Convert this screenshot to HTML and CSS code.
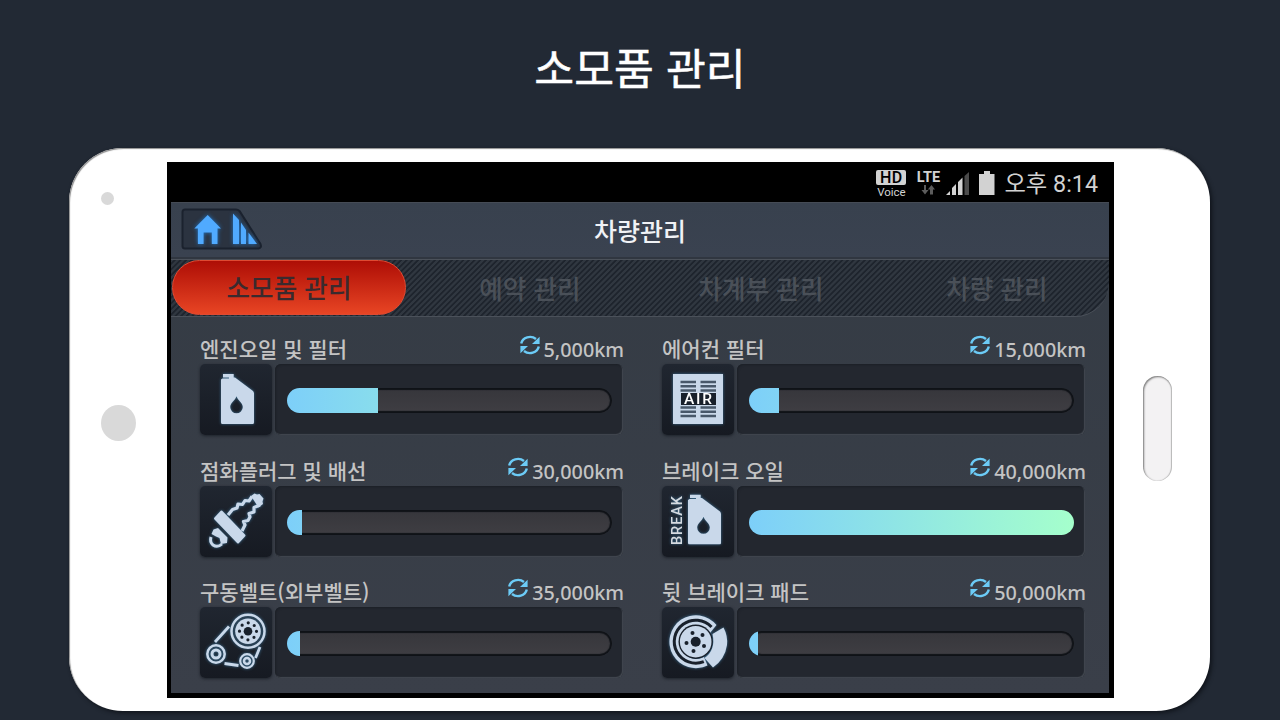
FILE: index.html
```
<!DOCTYPE html>
<html lang="ko">
  <head>
    <meta charset="UTF-8" />
    <meta name="viewport" content="width=device-width, initial-scale=1.0" />
    <title>소모품 관리</title>
    <link rel="stylesheet" href="styles.css">
  </head>

  <body>
    <!-- shared icons -->
    <svg class="sprite" width="0" height="0">
      <symbol id="refresh" viewBox="0 0 20 20">
        <path d="M1.200 8.500A9 8.300 0 0 1 16 4M18.800 11.500A9 8.300 0 0 1 4 16" fill="none" stroke="currentColor" stroke-width="2.400" />
        <path d="M19.600 1.800V9H12ZM.4 18.200V11H8Z" fill="currentColor" />
      </symbol>
      <symbol id="oil" viewBox="0 0 33 50">
        <path fill-rule="evenodd" d="M2 0H12.700V3.600H14L32 17Q33 18 33 19.500V48.500Q33 50 31.500 50H1.500Q0 50 0 48.500V5.500L1.500 4.500H8V3.400H2ZM15.500 22.300C14.500 26 9.200 29 9.200 33A6.300 6.300 0 0 0 21.800 33C21.800 29 16.500 26 15.500 22.300Z" />
      </symbol>
    </svg>

    <h1 class="page-title">소모품 관리</h1>

    <section class="phone">
      <div class="phone__left">
        <span class="camera"></span>
        <span class="sensor"></span>
      </div>

      <div class="screen">
        <div class="status">
          <div class="status__hd"><b>HD</b><span>Voice</span></div>
          <div class="status__lte">
            <b>LTE</b>
            <svg width="14" height="10" viewBox="0 0 14 10"><path d="M3 0H5V5H7.500L4 9.500.5 5H3ZM9 9.500V4.500H6.800L10.500 0 14 4.500H12V9.500Z" fill="#5c5c5c" /></svg>
          </div>
          <svg class="status__signal" width="24" height="24" viewBox="0 0 24 24">
            <path d="M0 23L4 19V23ZM6 23V16L10 12V23ZM12 23V10L16.500 5.500V23Z" fill="#d2d2d2" />
            <path d="M18.500 23V4L23 0V23Z" fill="#4b4b4b" />
          </svg>
          <svg class="status__battery" width="16" height="24" viewBox="0 0 16 24"><path d="M5 0H11V3H15.500V24H0V3H5Z" fill="#d2d2d2" /></svg>
          <span class="status__time">오후 8:14</span>
        </div>

        <div class="app">
          <header class="header">
            <svg class="header__home" width="82" height="42" viewBox="0 0 82 42">
              <path d="M4 1.500H55Q57 1.500 58.500 3L79.500 36Q81 40 77.500 40.500H4Q1.500 40.500 1.500 38V4Q1.500 1.500 4 1.500Z" fill="#2b3340" stroke="#1b222e" stroke-width="2" />
              <g class="glow">
                <path d="M26.700 7L40 20.500H36.500V36H30.800V24.500H22.600V36H16.900V20.500H13.300Z" />
                <path d="M52 5.500L58 12V36H52ZM60 14.500L65 22V36H60ZM67.500 24.500L76 36H67.500Z" />
              </g>
            </svg>
            <h2 class="header__title">차량관리</h2>
          </header>

          <nav class="tabs">
            <button class="active">소모품 관리</button>
            <button>예약 관리</button>
            <button>차계부 관리</button>
            <button>차량 관리</button>
          </nav>

          <div class="items">
            <div class="item">
              <h3>엔진오일 및 필터</h3>
              <p class="item__km"><svg><use href="#refresh" /></svg>5,000km</p>
              <div class="item__icon">
                <svg viewBox="0 0 72 71"><use href="#oil" x="21" y="10" width="33" height="50" /></svg>
              </div>
              <div class="item__bar"><div class="track"><div class="fill" style="width: 28%"></div></div></div>
            </div>

            <div class="item">
              <h3>에어컨 필터</h3>
              <p class="item__km"><svg><use href="#refresh" /></svg>15,000km</p>
              <div class="item__icon">
                <svg viewBox="0 0 72 71">
                  <path d="M11 10H61V60H11Z" />
                  <path d="M18.500 18H34M38.500 18H54M18.500 22.300H34M38.500 22.300H54M18.500 26.500H34M38.500 26.500H54M18.500 43.500H34M38.500 43.500H54M18.500 47.800H34M38.500 47.800H54M18.500 52H34M38.500 52H54" stroke="#48586a" stroke-width="2.600" />
                  <path d="M19 29H54V41H19Z" class="dark" />
                  <text x="22" y="40.300" class="air" textLength="28">AIR</text>
                </svg>
              </div>
              <div class="item__bar"><div class="track"><div class="fill" style="width: 9.300%"></div></div></div>
            </div>

            <div class="item">
              <h3>점화플러그 및 배선</h3>
              <p class="item__km"><svg><use href="#refresh" /></svg>30,000km</p>
              <div class="item__icon">
                <svg viewBox="0 0 72 71">
                  <path d="M21.500 25.500L44.500 49.500 38 56.500 15 32.500Z" stroke="#c9d8ea" stroke-width="2" stroke-linejoin="round" />
                  <path d="M28 29L32.500 23.500 37 22 38 18 42.500 18.500 45 14.500 49 15 52 10.500M42 45L45 39 43.500 35.500 48 34.500 50 31 49 27.500 54 26 54 21.500 60 19" class="line" stroke-width="3.200" stroke-linejoin="round" />
                  <path d="M51 10L54.500 7.500 57 8.500 59.500 8 63.500 12.500 62.500 15.500 63 18 58.500 21.500Z" />
                  <path d="M13.500 43.500L18 42 27.500 51.500 27 57 21 58 19.500 52 16 50.500 11.500 48Z" />
                  <path d="M11 51Q9.500 56 13 59Q17.500 62 22 58" class="line" stroke-width="3" />
                </svg>
              </div>
              <div class="item__bar"><div class="track"><div class="fill" style="width: 4.700%"></div></div></div>
            </div>

            <div class="item">
              <h3>브레이크 오일</h3>
              <p class="item__km"><svg><use href="#refresh" /></svg>40,000km</p>
              <div class="item__icon">
                <svg viewBox="0 0 72 71">
                  <text transform="translate(19.800 59) rotate(-90)" class="break" textLength="49">BREAK</text>
                  <use href="#oil" x="26" y="8.500" width="33" height="50" />
                </svg>
              </div>
              <div class="item__bar"><div class="track"><div class="fill" style="width: 100%"></div></div></div>
            </div>

            <div class="item">
              <h3>구동벨트(외부벨트)</h3>
              <p class="item__km"><svg><use href="#refresh" /></svg>35,000km</p>
              <div class="item__icon">
                <svg viewBox="0 0 72 71">
                  <path d="M15 35L29 19.500M24.500 56.500L38.500 58.500M60 40L55.500 51" class="line" stroke-width="2.800" />
                  <circle cx="48" cy="24.300" r="16.500" class="line" stroke-width="2.500" />
                  <circle cx="48" cy="24.300" r="12.800" />
                  <circle cx="48" cy="24.300" r="4.300" class="dark" />
                  <circle cx="48" cy="24.300" r="8.500" fill="none" stroke="#18202b" stroke-width="3.200" stroke-linecap="round" stroke-dasharray="0 6.676" />
                  <circle cx="16" cy="47" r="8.700" class="line" stroke-width="2.500" />
                  <circle cx="16" cy="47" r="4" class="line" stroke-width="3" />
                  <circle cx="47" cy="54" r="6.800" class="line" stroke-width="2.200" />
                  <circle cx="47" cy="54" r="3" class="line" stroke-width="2.500" />
                </svg>
              </div>
              <div class="item__bar"><div class="track"><div class="fill" style="width: 4%"></div></div></div>
            </div>

            <div class="item">
              <h3>뒷 브레이크 패드</h3>
              <p class="item__km"><svg><use href="#refresh" /></svg>50,000km</p>
              <div class="item__icon">
                <svg viewBox="0 0 72 71">
                  <path d="M54.500 18A26.500 26.500 0 1 0 45.500 58.500L42 50A16.500 16.500 0 1 1 48 26Z" />
                  <path d="M49.500 20A21.500 21.500 0 1 0 41.800 54.600" class="groove" />
                  <circle cx="33.700" cy="34.700" r="17.200" class="dark" />
                  <circle cx="33.700" cy="34.700" r="15.800" />
                  <circle cx="33.700" cy="34.700" r="5" class="dark" />
                  <g class="dark"><circle cx="30.500" cy="26" r="2" /><circle cx="40.500" cy="28" r="2" /><circle cx="42" cy="39" r="2" /><circle cx="31.500" cy="44" r="2" /><circle cx="24.500" cy="36" r="2" /></g>
                  <path d="M50.500 27L61.500 20.500Q66 29 65 38Q63 52 51 60.500L42.500 51Q54 43 50.500 27Z" />
                </svg>
              </div>
              <div class="item__bar"><div class="track"><div class="fill" style="width: 2.800%"></div></div></div>
            </div>
          </div>
        </div>
      </div>

      <div class="phone__right"><span class="home-key"></span></div>
    </section>
  </body>
</html>
```

FILE: styles.css
```
* {
  box-sizing: border-box;
}

body {
  margin: 0;
  height: 720px;
  overflow: hidden;
  background: #222934;
  font-family: "Noto Sans CJK KR", sans-serif;
}

h1,
h2,
h3,
p {
  margin: 0;
}

.sprite {
  display: block;
}

.page-title {
  height: 148px;
  padding-top: 36px;
  text-align: center;
  font-size: 43.3px;
  line-height: 60px;
  font-weight: 400;
  -webkit-text-stroke: 0.5px #fff;
  color: #fff;
}

/* phone */
.phone {
  display: flex;
  width: 1141px;
  height: 563px;
  margin-left: 69px;
  padding-top: 14px;
  border-radius: 54px;
  background: #fff;
  box-shadow: inset 1px 1px 1px #909090, 2px 2px 4px #10141b;
}

.phone__left {
  display: flex;
  flex-direction: column;
  width: 98px;
  padding-left: 32px;
  padding-top: 30px;
}

.camera,
.sensor {
  width: 13px;
  height: 13px;
  border-radius: 50%;
  background: #d9d9d9;
}

.sensor {
  width: 35px;
  height: 36px;
  margin-top: 200px;
}

.phone__right {
  padding: 214px 0 0 29px;
}

.home-key {
  display: block;
  width: 29px;
  height: 105px;
  border-radius: 15px;
  background: #f3f2f3;
  box-shadow: inset 1px 1px 2px #777, inset -1px 0 1px #bbb;
}

.screen {
  width: 947px;
  height: 536px;
  padding: 0 5px 5px 4px;
  background: #000;
}

/* status bar */
.status {
  display: flex;
  justify-content: flex-end;
  height: 40px;
  padding-right: 11px;
  color: #d2d2d2;
  font-family: Roboto, "Noto Sans CJK KR", sans-serif;
}

.status__hd {
  display: flex;
  flex-direction: column;
  align-items: center;
  width: 30px;
  margin: 8px 9px 0 0;
  font-size: 11.5px;
  line-height: 14px;
}

.status__hd b {
  width: 30px;
  height: 15px;
  border-radius: 2px;
  background: #d2d2d2;
  color: #000;
  font-size: 16px;
  font-weight: 500;
  line-height: 16px;
  letter-spacing: 0.5px;
  text-align: center;
}

.status__lte {
  display: flex;
  flex-direction: column;
  align-items: center;
  width: 26px;
  margin: 8px 5px 0 0;
  font-size: 14.5px;
  line-height: 15px;
}

.status__signal {
  margin: 10px 9px 0 0;
}

.status__battery {
  margin: 9px 9px 0 0;
}

.status__time {
  font-size: 23.3px;
  line-height: 45px;
  white-space: nowrap;
}

/* app */
.app {
  height: 491px;
  background: linear-gradient(#343b44, #3a3f49);
}

.header {
  display: flex;
  align-items: center;
  justify-content: center;
  position: relative;
  height: 57px;
  border-top: 1px solid #454b55;
  border-bottom: 2px solid #303640;
  background: linear-gradient(#38414e, #3a4250);
}

.header__home {
  position: absolute;
  left: 10px;
  top: 5px;
}

.glow {
  fill: #50aaff;
  filter: drop-shadow(0 0 2px #2277c8);
}

.header__title {
  font-size: 25px;
  line-height: 36px;
  font-weight: 500;
  color: #f0f2f5;
}

.tabs {
  display: grid;
  grid-template-columns: 235px 248px 214px 1fr;
  height: 58px;
  border: solid #4b515a;
  border-width: 1px 0;
  border-radius: 0 0 34px 0;
  background: repeating-linear-gradient(135deg, #303740 0 1.5px, #1e242d 2.2px 3.3px, #303740 4px);
}

.tabs button {
  padding: 0;
  border: 0;
  background: transparent;
  font: 500 25.6px/54px "Noto Sans CJK KR", sans-serif;
  color: #4a5058;
}

.tabs button:last-child {
  padding-left: 17px;
}

.tabs button.active {
  margin: 0 0 1px 1px;
  border: 1px solid #df4a32;
  border-radius: 28px;
  background: linear-gradient(#ae0e06, #e84524);
  line-height: 49px;
  padding-bottom: 3px;
  color: #3a2a2e;
}

/* consumables */
.items {
  display: grid;
  grid-template-columns: 423px 423px;
  grid-auto-rows: 107px;
  gap: 14.5px 39px;
  padding: 11px 0 0 29px;
}

.item {
  display: grid;
  grid-template-columns: 72px 348px;
  grid-template-rows: 36px 71px;
  column-gap: 3px;
  position: relative;
}

.item h3 {
  grid-column: 1 / 3;
  font-size: 21px;
  line-height: 40px;
  font-weight: 500;
  color: #c4c4c4;
}

.item__km {
  display: flex;
  gap: 4px;
  position: absolute;
  right: -1px;
  top: 0;
  font-family: "Noto Sans", sans-serif;
  font-size: 19.8px;
  line-height: 44px;
  font-weight: 500;
  color: #c4c4c4;
}

.item__km svg {
  width: 20px;
  height: 20px;
  margin-top: 7px;
  color: #6ccbf6;
}

.item__icon {
  border-radius: 5px;
  background: linear-gradient(#202630, #161a22);
  box-shadow: 0 1px 3px #1d222a;
}

.item__icon svg {
  display: block;
  fill: #c9d8ea;
  filter: drop-shadow(0 0 1.5px #3b6d91);
}

.item__icon .dark {
  fill: #18202b;
}

.item__icon .line {
  fill: none;
  stroke: #c9d8ea;
}

.item__icon .groove {
  fill: none;
  stroke: #18202b;
  stroke-width: 3px;
}

.item__icon text {
  font-family: Roboto, sans-serif;
  font-weight: 500;
}

.item__icon .air {
  fill: #fff;
  font-size: 15.5px;
}

.item__icon .break {
  fill: #d5dae0;
  font-size: 14.5px;
}

.item__bar {
  padding: 24px 11px 0 12px;
  border-radius: 6px;
  background: #23272f;
  box-shadow: inset -1px -1px 1px #434951, inset 1px 1px 2px #1c2027;
}

.track {
  height: 25px;
  overflow: hidden;
  border-radius: 13px;
  background: linear-gradient(#36363b, #3f3e43);
  box-shadow: inset 0 0 1px 2px #0f1217;
}

.fill {
  height: 25px;
  background: linear-gradient(90deg, #7dcff9, #a5ffcc) 0 0 / 325px 100%;
}
```
